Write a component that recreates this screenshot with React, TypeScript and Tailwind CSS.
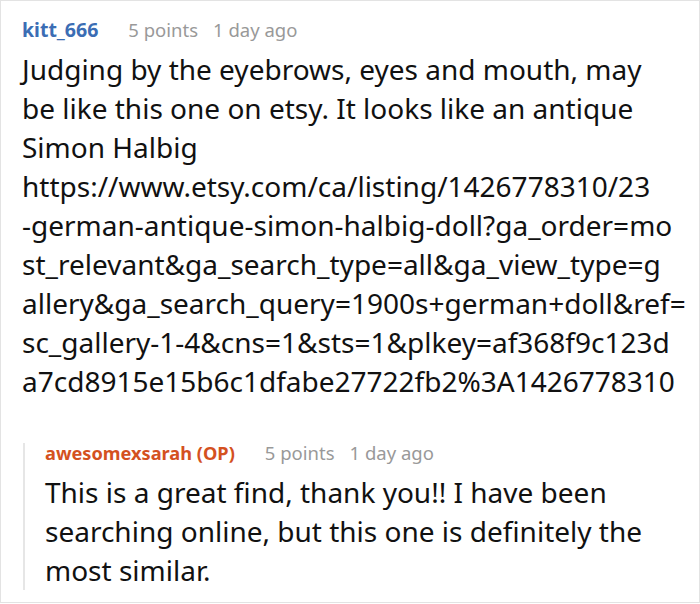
const body = "Judging by the eyebrows, eyes and mouth, may be like this one on etsy. It looks like an antique Simon Halbig";
// the url wraps at these points in the original
const urlLines = [
  "https://www.etsy.com/ca/listing/1426778310/23",
  "-german-antique-simon-halbig-doll?ga_order=mo",
  "st_relevant&ga_search_type=all&ga_view_type=g",
  "allery&ga_search_query=1900s+german+doll&ref=",
  "sc_gallery-1-4&cns=1&sts=1&plkey=af368f9c123d",
  "a7cd8915e15b6c1dfabe27722fb2%3A1426778310",
];

function Meta({ name, color }: { name: string; color: string }) {
  return (
    <div className="flex items-baseline text-[18.5px] leading-[20px]">
      <span className={`font-bold ${color}`}>{name}</span>
      <span className="ml-[30px] text-[#999999]">5 points</span>
      <span className="ml-[15px] text-[#999999]">1 day ago</span>
    </div>
  );
}

export default function App() {
  return (
    <div
      className="h-[603px] w-[700px] overflow-hidden border border-[#e3e3e3] bg-white"
      style={{ fontFamily: '"Noto Sans", "Open Sans", sans-serif' }}
    >
      <div className="pl-[21px] pr-[20px] pt-[19px]">
        {/* Comment */}
        <Meta name="kitt_666" color="text-[19.5px] text-[#3b6db4]" />
        <div className="mt-[10px] text-[28px] leading-[39px] text-[#111111]">
          <p>{body}</p>
          <p>
            {urlLines.map((line) => (
              <span key={line} className="block whitespace-nowrap">
                {line}
              </span>
            ))}
          </p>
        </div>

        {/* Reply */}
        <div className="mt-[55px] ml-[1px] border-l-2 border-[#e6e6e6] pl-[20px]">
          <div className="-mt-[13px]">
            <Meta name="awesomexsarah (OP)" color="text-[18.2px] text-[#d4511f]" />
          </div>
          <p className="mt-[10px] -mb-[4px] text-[28px] leading-[39px] text-[#111111]">
            This is a great find, thank you!! I have been searching online, but this one is definitely the most similar.
          </p>
        </div>
      </div>
    </div>
  );
}
